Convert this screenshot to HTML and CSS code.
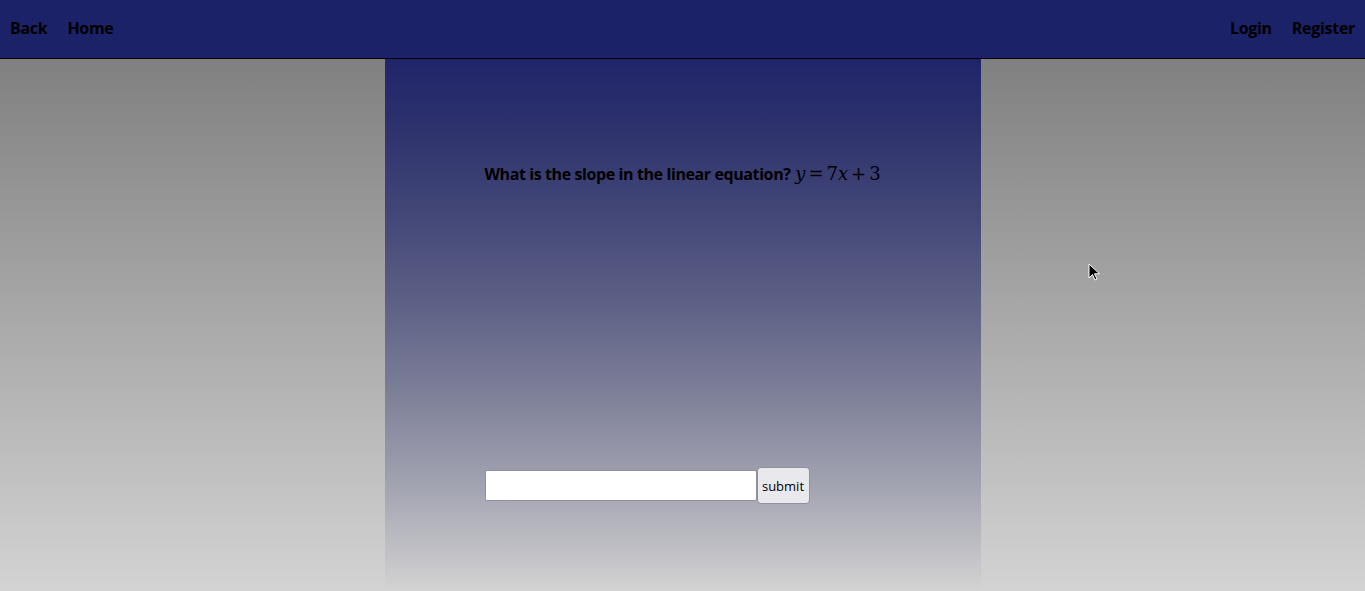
FILE: index.html
```html
<!DOCTYPE html>
<html>
<head>
<meta charset="utf-8">
<link rel="stylesheet" href="styles.css">
</head>
<body>
<header class="topbar">
  <nav class="nav-left">
    <a class="nav-link" href="#">Back</a>
    <a class="nav-link" href="#">Home</a>
  </nav>
  <nav class="nav-right">
    <a class="nav-link" href="#">Login</a>
    <a class="nav-link" href="#">Register</a>
  </nav>
</header>
<main class="stage">
  <section class="panel">
    <p class="question">What is the slope in the linear equation? <span class="math"><i>y</i><span class="op">=</span>7<i>x</i><span class="op">+</span>3</span></p>
    <form class="answer">
      <input class="answer-input" type="text">
      <button class="answer-btn" type="button">submit</button>
    </form>
  </section>
</main>
<svg class="cursor" width="13" height="20" viewBox="0 0 13 20"><path d="M1 1 L1 15 L4.5 11.5 L7 17 L9 16 L6.5 10.8 L11.5 10.8 Z" fill="#000" stroke="#fff" stroke-width="1"/></svg>
</body>
</html>
```
FILE: styles.css
```css
html, body {
  margin: 0;
  padding: 0;
  height: 100%;
}
body {
  font-family: "Open Sans", "DejaVu Sans", sans-serif;
  display: flex;
  flex-direction: column;
  background: #d3d3d3;
  overflow: hidden;
}
.topbar {
  height: 58px;
  flex: none;
  background: #1c2268;
  border-bottom: 1px solid #000;
  display: flex;
  justify-content: space-between;
  align-items: center;
  padding: 0 10px 2px;
  box-sizing: content-box;
}
.topbar {
  height: 56px;
}
.nav-left, .nav-right {
  display: flex;
  gap: 20px;
}
.nav-link {
  color: #000;
  text-decoration: none;
  font-weight: bold;
  font-size: 16px;
  letter-spacing: -0.3px;
}
.stage {
  flex: 1;
  display: flex;
  justify-content: center;
  background: linear-gradient(#808080, #d3d3d3);
}
.panel {
  width: 496px;
  padding: 104px 0 0 100px;
  background: linear-gradient(rgba(28, 34, 104, 0.97), rgba(28, 34, 104, 0));
  display: flex;
  flex-direction: column;
}
.question {
  margin: 0;
  font-size: 16px;
  font-weight: bold;
  line-height: 22px;
  letter-spacing: -0.4px;
}
.math {
  font-family: "DejaVu Serif", "Liberation Serif", serif;
  font-weight: normal;
  font-size: 18px;
  letter-spacing: 0;
  margin-left: 1px;
}
.math .op {
  margin: 0 3px;
}
.answer {
  margin-top: 282px;
  display: flex;
  align-items: center;
}
.answer-input {
  width: 272px;
  box-sizing: border-box;
  height: 31px;
  border: 1px solid #8f8f9d;
  border-radius: 2px;
  background: #fff;
  margin: 0;
}
.answer-btn {
  height: 37px;
  width: 53px;
  border: 1px solid #8f8f9d;
  border-radius: 4px;
  background: #e9e9ed;
  font-family: "Open Sans", sans-serif;
  font-size: 13px;
  padding: 0;
  margin: 0;
  color: #000;
}
.cursor {
  position: absolute;
  left: 1088px;
  top: 263px;
}
```
